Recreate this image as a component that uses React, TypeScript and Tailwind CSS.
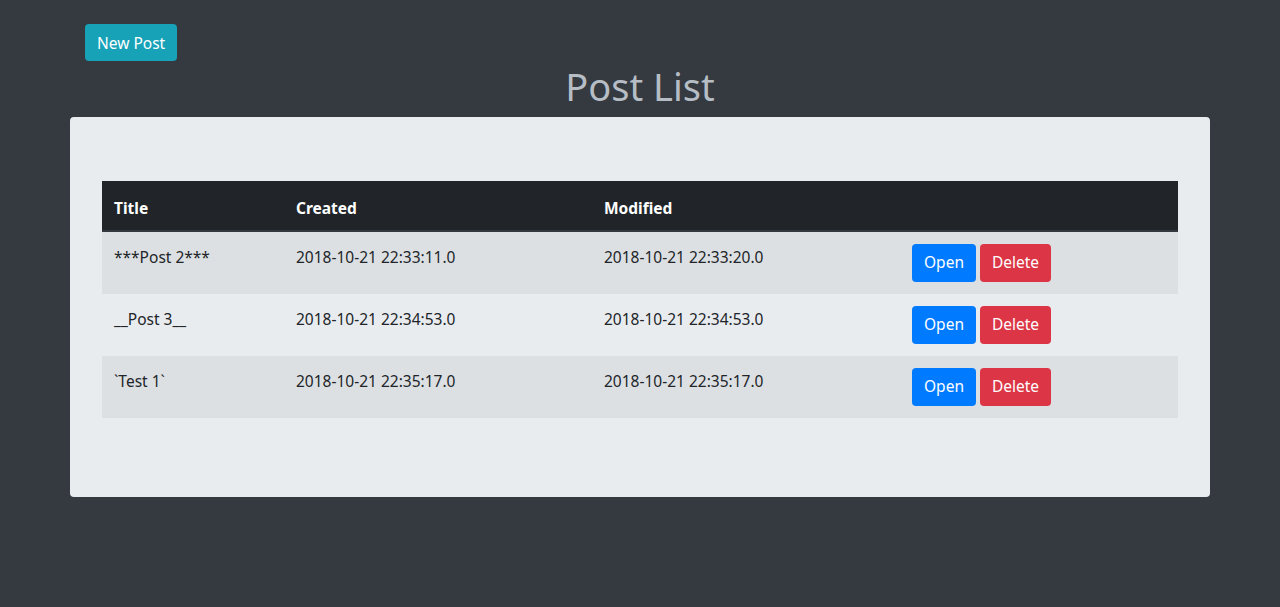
const posts = [
  { title: '***Post 2***', created: '2018-10-21 22:33:11.0', modified: '2018-10-21 22:33:20.0' },
  { title: '__Post 3__', created: '2018-10-21 22:34:53.0', modified: '2018-10-21 22:34:53.0' },
  { title: '`Test 1`', created: '2018-10-21 22:35:17.0', modified: '2018-10-21 22:35:17.0' },
];

export default function App() {
  return (
    <div className="min-h-screen bg-[#343a40] font-['Noto_Sans','Liberation_Sans',sans-serif] text-[15.5px] text-[#212529]">
      <div className="mx-auto w-[1140px] pt-6">
        <div className="px-[15px]">
          <button className="h-[37px] rounded bg-[#17a2b8] px-3 leading-6 text-white">New Post</button>
        </div>
        <h1 className="mb-2 h-12 text-center text-[38px] leading-[50px] text-[#b6bdc5]">Post List</h1>
        <div className="rounded bg-[#e9ecef] px-8 pt-16 pb-[79px]">
          <table className="w-full border-collapse text-left">
            <thead>
              <tr className="border-b-2 border-[#32383e] bg-[#212529] text-white">
                <th className="w-[182px] px-3 pt-[15px] pb-[10px] font-bold leading-6">Title</th>
                <th className="w-[308px] px-3 pt-[15px] pb-[10px] font-bold leading-6">Created</th>
                <th className="w-[308px] px-3 pt-[15px] pb-[10px] font-bold leading-6">Modified</th>
                <th className="px-3 pt-[15px] pb-[10px]"></th>
              </tr>
            </thead>
            <tbody>
              {posts.map((p, i) => (
                <tr key={p.title} className={i % 2 === 0 ? 'bg-[#dde0e3]' : ''}>
                  <td className="px-3 pt-[13px] pb-[11px] align-top leading-6">{p.title}</td>
                  <td className="px-3 pt-[13px] pb-[11px] align-top leading-6">{p.created}</td>
                  <td className="px-3 pt-[13px] pb-[11px] align-top leading-6">{p.modified}</td>
                  <td className="p-3 align-top">
                    <div className="flex gap-1">
                      <button className="h-[38px] rounded bg-[#007bff] px-3 text-white">Open</button>
                      <button className="h-[38px] rounded bg-[#dc3545] px-3 text-white">Delete</button>
                    </div>
                  </td>
                </tr>
              ))}
            </tbody>
          </table>
        </div>
      </div>
    </div>
  );
}
